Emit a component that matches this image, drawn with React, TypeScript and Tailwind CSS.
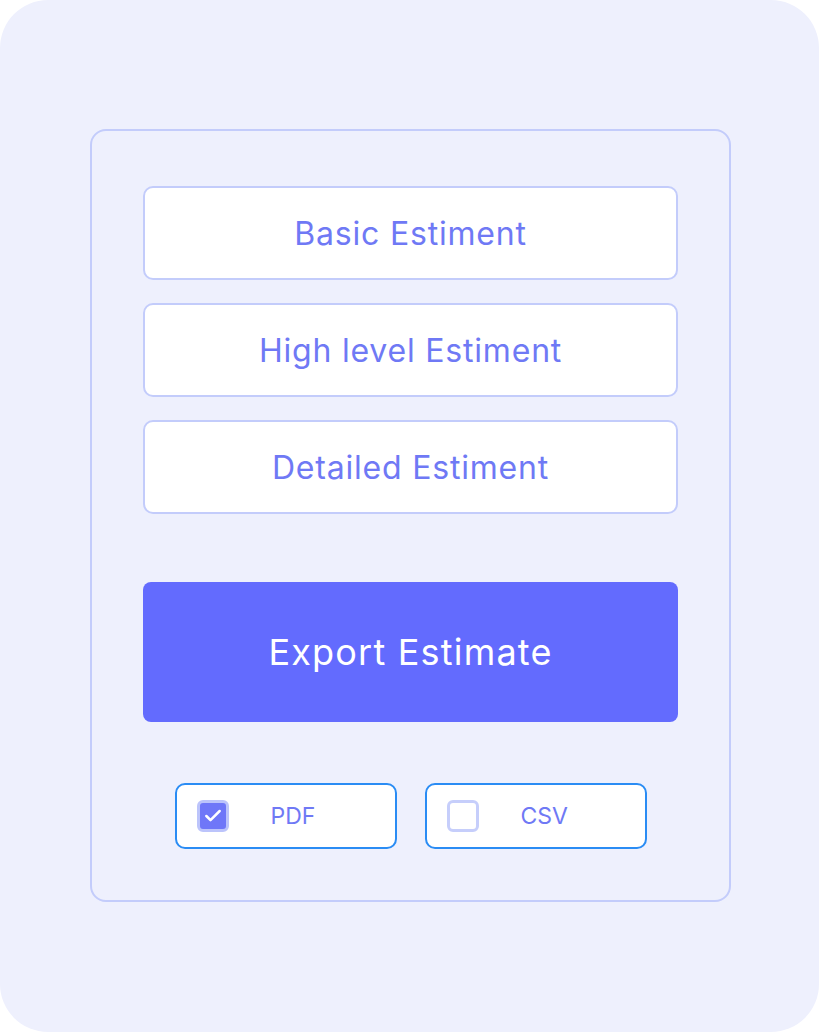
import { Check } from 'lucide-react';

const options = ['Basic Estiment', 'High level Estiment', 'Detailed Estiment'];

function FormatBox({ label, checked }: { label: string; checked?: boolean }) {
  return (
    <div className="flex h-[66px] w-[222px] items-center rounded-[10px] border-2 border-[#2a8cf4] bg-white pl-[20px]">
      {checked ? (
        <div className="flex h-[32px] w-[32px] items-center justify-center rounded-[6px] border-[3px] border-[#bcc4fb] bg-[#6f77f8]">
          <Check size={20} strokeWidth={3} className="text-white" />
        </div>
      ) : (
        <div className="h-[32px] w-[32px] rounded-[6px] border-[3px] border-[#c6cefb] bg-white" />
      )}
      <span className="ml-[42px] text-[23px] text-[#6f79f5]">{label}</span>
    </div>
  );
}

export default function App() {
  return (
    <div className="h-[1032px] w-[819px] bg-white" style={{ fontFamily: 'Inter, "Noto Sans", sans-serif' }}>
      <div className="h-full rounded-[48px] bg-[#eef0fd] pl-[90px] pr-[88px] pt-[129px]">
        <div className="flex h-[773px] flex-col rounded-[16px] border-2 border-[#c3ccfb] px-[51px] pt-[55px]">
          <div className="flex flex-col gap-[23px]">
            {options.map((o) => (
              <div
                key={o}
                className="flex h-[94px] items-center justify-center rounded-[10px] border-2 border-[#c3ccfb] bg-white pt-[2px] text-[32px] tracking-[0.8px] text-[#6f79f5]"
              >
                {o}
              </div>
            ))}
          </div>

          <button className="mt-[68px] h-[140px] w-full rounded-[8px] bg-[#636bfe] text-[36px] tracking-[1.2px] text-white">
            Export Estimate
          </button>

          <div className="mt-[61px] flex justify-center gap-[28px]">
            <FormatBox label="PDF" checked />
            <FormatBox label="CSV" />
          </div>
        </div>
      </div>
    </div>
  );
}
